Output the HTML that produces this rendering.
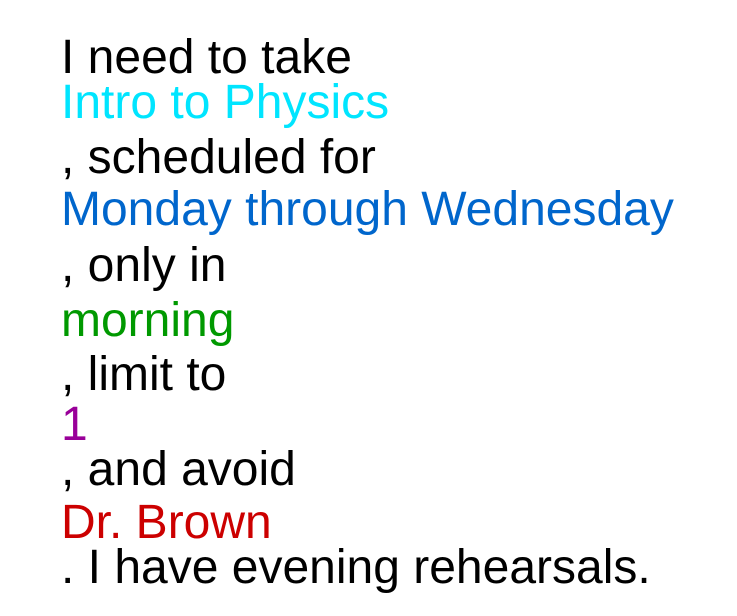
<!DOCTYPE html>
<html><head><meta charset="utf-8"><style>
html,body{margin:0;padding:0;background:#fff;width:737px;height:616px;overflow:hidden}
div{position:absolute;left:61px;font-family:"Liberation Sans",Arial,sans-serif;font-size:48px;line-height:48px;white-space:nowrap;color:#000}
</style></head><body>
<div style="top:34px">I need to take</div>
<div style="top:79px;color:#00e5ff">Intro to Physics</div>
<div style="top:134px">, scheduled for</div>
<div style="top:186px;color:#0066cc">Monday through Wednesday</div>
<div style="top:242px">, only in</div>
<div style="top:297px;color:#009900">morning</div>
<div style="top:351px">, limit to</div>
<div style="top:401px;color:#990099">1</div>
<div style="top:446px">, and avoid</div>
<div style="top:499px;color:#cc0000">Dr. Brown</div>
<div style="top:544px">. I have evening rehearsals.</div>
</body></html>
